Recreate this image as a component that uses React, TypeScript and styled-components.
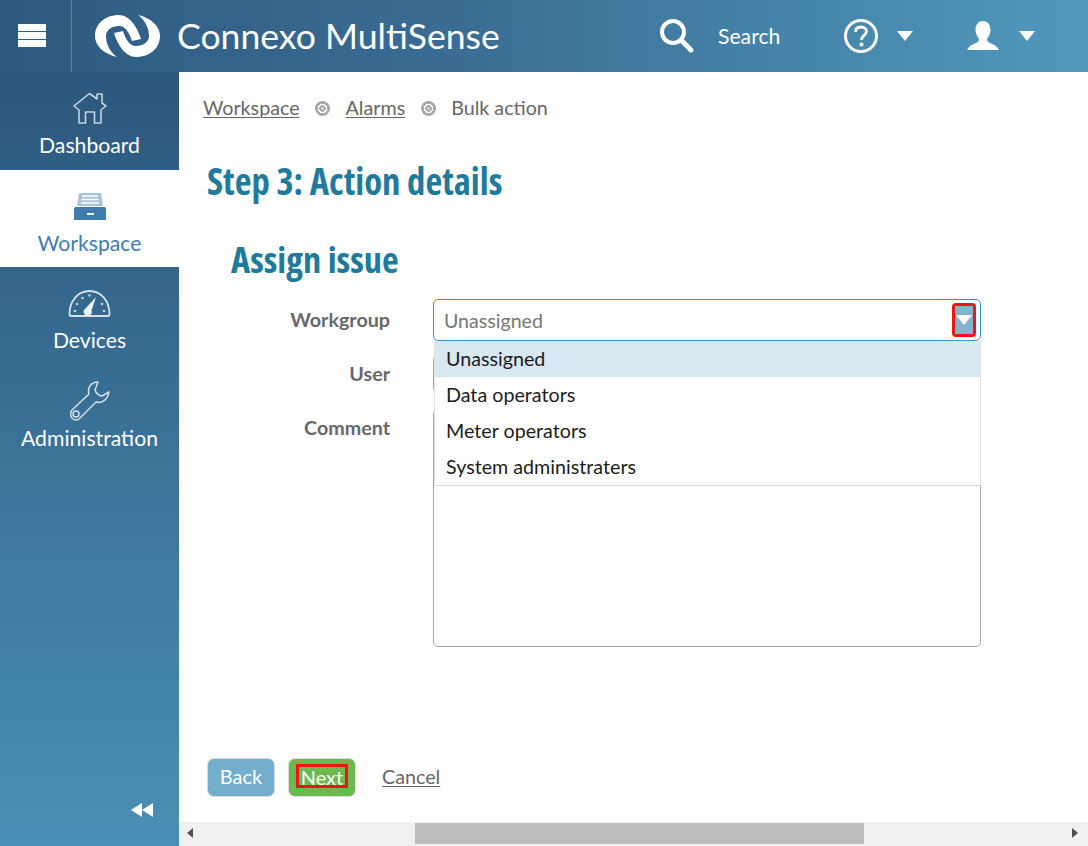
import React from 'react'
import styled, { createGlobalStyle } from 'styled-components'

const GlobalStyle = createGlobalStyle`
  html, body { margin: 0; padding: 0; height: 100%; overflow: hidden; }
  body { font-family: Lato, "Liberation Sans", sans-serif; background: #fff; }
  #root { height: 100%; }
`

const Page = styled.div`
  width: 1088px;
  height: 846px;
  display: flex;
  flex-direction: column;
  overflow: hidden;
`

const TopBar = styled.header`
  height: 72px;
  flex: none;
  display: flex;
  align-items: stretch;
  color: #fff;
  background: linear-gradient(90deg, #2f5a80 0%, #3a6b92 40%, #5099bd 100%);
`

const MenuButton = styled.div`
  width: 53px;
  border-right: 1px solid #5b82a2;
  display: flex;
  align-items: center;
  padding-left: 18px;
`

const Burger = styled.div`
  width: 28px;
  height: 23px;
  display: flex;
  flex-direction: column;
  justify-content: space-between;
  margin-top: -1px;
  span { display: block; height: 7px; background: #fff; }
`

const Brand = styled.div`
  display: flex;
  align-items: center;
  margin-left: 23px;
  width: 564px;
  flex: none;
`

const BrandName = styled.span`
  font-size: 35.6px;
  margin-left: 17px;
  margin-top: -1px;
  white-space: nowrap;
`

const HeaderTools = styled.div`
  display: flex;
  align-items: center;
`

const SearchLabel = styled.span`
  margin-left: 23px;
  margin-right: 63px;
  font-size: 21.2px;
  margin-top: -1px;
`

const Caret = styled.i<{ $gap: number; $after: number }>`
  display: block;
  width: 0;
  height: 0;
  margin-left: ${p => p.$gap}px;
  margin-right: ${p => p.$after}px;
  border-left: 8px solid transparent;
  border-right: 8px solid transparent;
  border-top: 10px solid #fff;
`

const Body = styled.div`
  flex: 1;
  min-height: 0;
  display: flex;
`

const Sidebar = styled.nav`
  width: 179px;
  flex: none;
  display: flex;
  flex-direction: column;
  background: linear-gradient(180deg, #2d577d 0%, #4a8fb5 100%);
`

const NavItem = styled.div<{ $active?: boolean; $height: number }>`
  height: ${p => p.$height}px;
  flex: none;
  display: flex;
  flex-direction: column;
  align-items: center;
  padding-top: 12px;
  box-sizing: border-box;
  font-size: 21.2px;
  line-height: 26px;
  color: ${p => (p.$active ? '#3f7cb0' : '#fff')};
  background: ${p => (p.$active ? '#fff' : 'transparent')};
`

const NavIcon = styled.div`
  height: 48px;
  display: flex;
  align-items: center;
  justify-content: center;
  svg { display: block; }
`

const Collapse = styled.div`
  margin-top: auto;
  display: flex;
  justify-content: flex-end;
  padding: 0 26px 29px 0;
`

const Main = styled.main`
  flex: 1;
  min-width: 0;
  display: flex;
  flex-direction: column;
  color: #686868;
`

const Content = styled.div`
  flex: 1;
  min-height: 0;
  display: flex;
  flex-direction: column;
  padding: 0 24px;
`

const Breadcrumbs = styled.div`
  display: flex;
  align-items: center;
  height: 24px;
  margin-top: 24px;
  font-size: 19.7px;
  color: #666;
`

const Crumb = styled.span<{ $link?: boolean }>`
  text-decoration: ${p => (p.$link ? 'underline' : 'none')};
  text-underline-offset: 2px;
  text-decoration-thickness: 1px;
  margin-top: -1px;
`

const CrumbDot = styled.i`
  display: block;
  width: 15px;
  height: 15px;
  margin: 0 15.5px;
  border-radius: 50%;
  background: radial-gradient(circle, #d0d0d0 0 1.5px, #a8a8a8 2px 3px, #fff 3.5px 4.5px, #a8a8a8 5px);
`

const PageTitle = styled.h1`
  margin: 36px 0 0 4px;
  font-family: "Open Sans", "Liberation Sans", sans-serif;
  font-stretch: 75%;
  font-weight: 700;
  font-size: 36.7px;
  line-height: 50px;
  color: #1f7a9c;
  white-space: nowrap;
`

const SectionTitle = styled.h2`
  margin: 28px 0 0 28px;
  font-family: "Open Sans", "Liberation Sans", sans-serif;
  font-stretch: 75%;
  font-weight: 700;
  font-size: 36.4px;
  line-height: 50px;
  color: #1f7a9c;
  white-space: nowrap;
`

const Form = styled.div`
  margin-top: 15px;
  display: flex;
  flex-direction: column;
  position: relative;
`

const FormRow = styled.div<{ $top?: number }>`
  display: flex;
  align-items: flex-start;
  margin-top: ${p => p.$top ?? 0}px;
`

const FieldLabel = styled.label<{ $line: number }>`
  width: 187px;
  flex: none;
  text-align: right;
  font-size: 19.7px;
  font-weight: 700;
  line-height: ${p => p.$line}px;
  color: #686868;
`

const Field = styled.div<{ $height: number; $focus?: boolean }>`
  margin-left: 43px;
  width: 548px;
  height: ${p => p.$height}px;
  box-sizing: border-box;
  border: 1px solid ${p => (p.$focus ? '#3a93d8' : '#a8a8a8')};
  border-radius: 5px;
  display: flex;
  align-items: center;
  justify-content: space-between;
  padding: 0 4px 0 10px;
  font-size: 19.6px;
  color: #777;
  background: #fff;
`

const TriggerMark = styled.div`
  width: 24px;
  height: 34px;
  box-sizing: border-box;
  border: 3px solid #f01414;
  border-radius: 4px;
  background: #82b6d0;
  display: flex;
  align-items: center;
  justify-content: center;
  &::after {
    content: '';
    width: 0;
    height: 0;
    border-left: 8px solid transparent;
    border-right: 8px solid transparent;
    border-top: 10px solid #fff;
  }
`

const Dropdown = styled.ul`
  position: absolute;
  left: 231px;
  top: 42px;
  width: 547px;
  margin: 0;
  padding: 0;
  list-style: none;
  box-sizing: border-box;
  background: #fff;
  border-left: 1px solid #e2e2e2;
  border-right: 1px solid #e2e2e2;
  border-bottom: 1px solid #d8d8d8;
  z-index: 2;
`

const Option = styled.li<{ $selected?: boolean }>`
  height: 36px;
  line-height: 36px;
  padding-left: 11px;
  font-size: 19.7px;
  color: #1c1c1c;
  background: ${p => (p.$selected ? '#d8e8f0' : '#fff')};
`

const Footer = styled.div`
  margin-top: auto;
  margin-bottom: 25px;
  margin-left: 4px;
  display: flex;
  align-items: center;
`

const Button = styled.div<{ $color: string }>`
  width: 68px;
  height: 39px;
  box-sizing: border-box;
  margin-right: 13px;
  padding-bottom: 3px;
  border: 1px solid #dcdcdc;
  border-radius: 7px;
  background: ${p => p.$color};
  color: #fff;
  font-size: 20px;
  display: flex;
  align-items: center;
  justify-content: center;
`

const NextMark = styled.span`
  display: block;
  border: 3px solid #f01414;
  padding: 0 2px;
  line-height: 20px;
  height: 24px;
  box-sizing: border-box;
`

const CancelLink = styled.span`
  margin-left: 13px;
  margin-top: -3px;
  font-size: 19.7px;
  text-decoration: underline;
  text-underline-offset: 2px;
  text-decoration-thickness: 1px;
  color: #666;
`

const ScrollBar = styled.div`
  height: 24px;
  flex: none;
  display: flex;
  align-items: center;
  padding-bottom: 2px;
  box-sizing: border-box;
  background: #f0f0f0;
`

const ScrollArrow = styled.i<{ $right?: boolean }>`
  display: block;
  width: 0;
  height: 0;
  margin: ${p => (p.$right ? '0 10px 0 auto' : '0 0 0 8px')};
  border-top: 5.5px solid transparent;
  border-bottom: 5.5px solid transparent;
  ${p => (p.$right ? 'border-left: 6px solid #505050;' : 'border-right: 6px solid #505050;')}
`

const ScrollThumb = styled.div`
  width: 449px;
  height: 21px;
  margin-left: 222px;
  background: #bdbdbd;
`

const logoArc = 'M46 24 C42 11 34 0 24 0 C10 0 0 9 0 21 C0 31 9 39 22 42 C15 37 11 29 11 21 C11 15 17 11 24 11 C30 11 34 17 37 26 Z'

const Logo = () => (
  <svg width="65" height="42" viewBox="0 0 65 42" fill="#fff">
    <path d={logoArc} />
    <path d={logoArc} transform="rotate(180 32.5 21)" />
  </svg>
)

const SearchIcon = () => (
  <svg width="36" height="36" viewBox="0 0 36 36" fill="none" stroke="#fff">
    <circle cx="14" cy="14" r="11" strokeWidth="4" />
    <path d="M22 22 L32 32" strokeWidth="5" strokeLinecap="round" />
  </svg>
)

const HelpIcon = () => (
  <svg width="36" height="36" viewBox="0 0 36 36" fill="none">
    <circle cx="18" cy="18" r="15.500" stroke="#fff" strokeWidth="3" />
    <path d="M12.500 14 C12.500 10.500 15 9 18 9 C21.500 9 23.500 11 23.500 13.500 C23.500 17 18.500 17.500 18.500 22" stroke="#fff" strokeWidth="2.800" />
    <circle cx="18.500" cy="26.500" r="2" fill="#fff" />
  </svg>
)

const UserIcon = () => (
  <svg width="32" height="30" viewBox="0 0 32 30" fill="#fff">
    <path d="M16 0 C21 0 23.500 4 23.500 9 C23.500 13 21.500 16 20 18 C20 20 21 21 23 22 C27 23.500 30 25 32 29 L0 29 C2 25 5 23.500 9 22 C11 21 12 20 12 18 C10.500 16 8.500 13 8.500 9 C8.500 4 11 0 16 0 Z" />
  </svg>
)

const HomeIcon = () => (
  <svg width="34" height="32" viewBox="0 0 34 32" fill="none" stroke="#c4d3df" strokeWidth="1.600">
    <path d="M1 14 L16.500 1.500 L24 7 L24 2 L29 2 L29 11 L33 14 L28 18 L28 31 L21.500 31 L21.500 20 L12.500 20 L12.500 31 L6 31 L6 18 Z" strokeLinejoin="round" />
  </svg>
)

const DrawerIcon = () => (
  <svg width="32" height="27" viewBox="0 0 32 27">
    <path d="M5 0 H27 L29 13 H3 Z" fill="#a9c3d9" />
    <path d="M8 3 H24 M7.500 6.500 H24.500 M7 10 H25" stroke="#fff" strokeWidth="1.500" />
    <path d="M0 16 L1 14 H31 L32 16 V27 H0 Z" fill="#3f7cb0" />
    <rect x="13" y="20" width="7" height="2" fill="#fff" />
  </svg>
)

const GaugeIcon = () => (
  <svg width="43" height="27" viewBox="0 0 43 27" fill="none">
    <path d="M1.500 24 C1.500 11 10 1 21.500 1 C33 1 41.500 11 41.500 24 Q41.500 26 39.500 26 H3.500 Q1.500 26 1.500 24 Z" stroke="#d4dfe8" strokeWidth="1.800" />
    <path d="M28 7 L23.500 20.500 A4 4 0 1 1 17.500 18.500 Z" fill="#eef2f6" />
    <g fill="#c4d3df">
      <circle cx="7" cy="21" r="1.300" />
      <circle cx="9" cy="14" r="1.300" />
      <circle cx="14.500" cy="8" r="1.300" />
      <circle cx="21.500" cy="5.500" r="1.300" />
      <circle cx="34" cy="14" r="1.300" />
      <circle cx="36" cy="21" r="1.300" />
    </g>
  </svg>
)

const WrenchIcon = () => (
  <svg width="40" height="40" viewBox="0 0 40 40" fill="none" stroke="#d4dfe8" strokeWidth="1.500" strokeLinejoin="round">
    <path d="M28 1 C21 1 17 7 19 13 L2 29 C0 32 0 36 3 38 C6 40 9 39 10 37 L26 21 C32 23 38 18 39 11 L32 15 C29 15 26 12 25 9 Z" />
    <circle cx="6" cy="33" r="3" />
  </svg>
)

const CollapseIcon = () => (
  <svg width="22" height="14" viewBox="0 0 22 14" fill="#fff">
    <path d="M0 7 L11 0 V14 Z" />
    <path d="M11 7 L22 0 V14 Z" />
  </svg>
)

export default function App() {
  return (
    <Page>
      <GlobalStyle />
      <TopBar>
        <MenuButton>
          <Burger><span /><span /><span /></Burger>
        </MenuButton>
        <Brand>
          <Logo />
          <BrandName>Connexo MultiSense</BrandName>
        </Brand>
        <HeaderTools>
          <SearchIcon />
          <SearchLabel>Search</SearchLabel>
          <HelpIcon />
          <Caret $gap={18} $after={54} />
          <UserIcon />
          <Caret $gap={20} $after={0} />
        </HeaderTools>
      </TopBar>
      <Body>
        <Sidebar>
          <NavItem $height={98}><NavIcon><HomeIcon /></NavIcon>Dashboard</NavItem>
          <NavItem $height={97} $active><NavIcon><DrawerIcon /></NavIcon>Workspace</NavItem>
          <NavItem $height={98}><NavIcon><GaugeIcon /></NavIcon>Devices</NavItem>
          <NavItem $height={98}><NavIcon><WrenchIcon /></NavIcon>Administration</NavItem>
          <Collapse><CollapseIcon /></Collapse>
        </Sidebar>
        <Main>
          <Content>
            <Breadcrumbs>
              <Crumb $link>Workspace</Crumb>
              <CrumbDot />
              <Crumb $link>Alarms</Crumb>
              <CrumbDot />
              <Crumb>Bulk action</Crumb>
            </Breadcrumbs>
            <PageTitle>Step 3: Action details</PageTitle>
            <SectionTitle>Assign issue</SectionTitle>
            <Form>
              <FormRow>
                <FieldLabel $line={42}>Workgroup</FieldLabel>
                <Field $height={42} $focus>Unassigned<TriggerMark /></Field>
              </FormRow>
              <FormRow $top={14}>
                <FieldLabel $line={38}>User</FieldLabel>
                <Field $height={38} />
              </FormRow>
              <FormRow $top={16}>
                <FieldLabel $line={38}>Comment</FieldLabel>
                <Field $height={238} />
              </FormRow>
              <Dropdown>
                <Option $selected>Unassigned</Option>
                <Option>Data operators</Option>
                <Option>Meter operators</Option>
                <Option>System administraters</Option>
              </Dropdown>
            </Form>
            <Footer>
              <Button $color="#73aeca">Back</Button>
              <Button $color="#6cb94f"><NextMark>Next</NextMark></Button>
              <CancelLink>Cancel</CancelLink>
            </Footer>
          </Content>
          <ScrollBar>
            <ScrollArrow />
            <ScrollThumb />
            <ScrollArrow $right />
          </ScrollBar>
        </Main>
      </Body>
    </Page>
  )
}
